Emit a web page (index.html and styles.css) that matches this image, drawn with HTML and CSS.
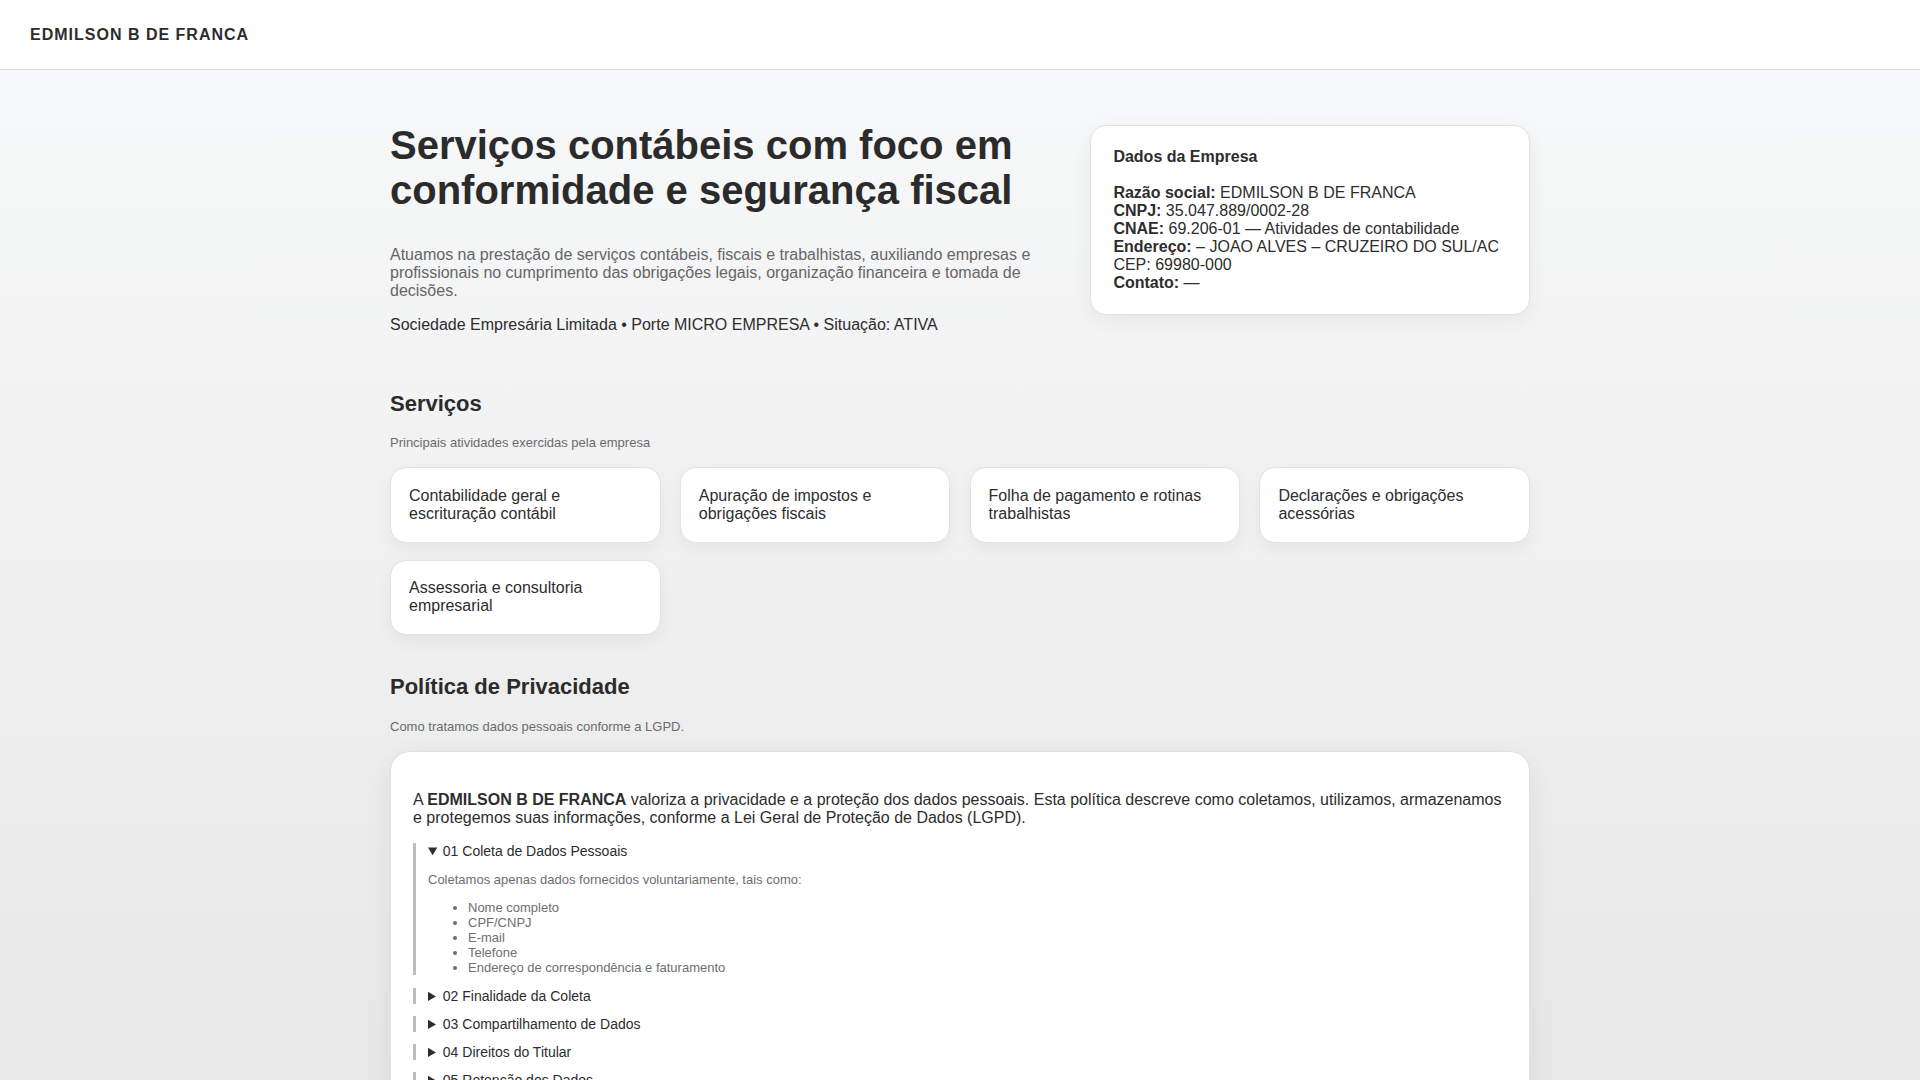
FILE: index.html
```html
<!DOCTYPE html>
<html lang="pt-BR">
<head>
<meta charset="utf-8">
<title>EDMILSON B DE FRANCA</title>
<link rel="stylesheet" href="styles.css">
</head>
<body>
<header class="site-header">
  <div class="brand">EDMILSON B DE FRANCA</div>
</header>
<main class="container">
  <section class="hero">
    <div class="hero-text">
      <h1 class="hero-title">Serviços contábeis com foco em conformidade e segurança fiscal</h1>
      <p class="hero-lead">Atuamos na prestação de serviços contábeis, fiscais e trabalhistas, auxiliando empresas e profissionais no cumprimento das obrigações legais, organização financeira e tomada de decisões.</p>
      <p class="hero-meta">Sociedade Empresária Limitada • Porte MICRO EMPRESA • Situação: ATIVA</p>
    </div>
    <aside class="company-card">
      <h3 class="company-title">Dados da Empresa</h3>
      <p class="company-info">
        <strong>Razão social:</strong> EDMILSON B DE FRANCA<br>
        <strong>CNPJ:</strong> 35.047.889/0002-28<br>
        <strong>CNAE:</strong> 69.206-01 — Atividades de contabilidade<br>
        <strong>Endereço:</strong> – JOAO ALVES – CRUZEIRO DO SUL/AC<br>
        CEP: 69980-000<br>
        <strong>Contato:</strong> —
      </p>
    </aside>
  </section>

  <section class="section services">
    <h2 class="section-title">Serviços</h2>
    <p class="section-sub">Principais atividades exercidas pela empresa</p>
    <div class="service-grid">
      <div class="service-card">Contabilidade geral e escrituração contábil</div>
      <div class="service-card">Apuração de impostos e obrigações fiscais</div>
      <div class="service-card">Folha de pagamento e rotinas trabalhistas</div>
      <div class="service-card">Declarações e obrigações acessórias</div>
      <div class="service-card">Assessoria e consultoria empresarial</div>
    </div>
  </section>

  <section class="section privacy">
    <h2 class="section-title">Política de Privacidade</h2>
    <p class="section-sub">Como tratamos dados pessoais conforme a LGPD.</p>
    <div class="privacy-card">
      <p class="privacy-intro">A <strong>EDMILSON B DE FRANCA</strong> valoriza a privacidade e a proteção dos dados pessoais. Esta política descreve como coletamos, utilizamos, armazenamos e protegemos suas informações, conforme a Lei Geral de Proteção de Dados (LGPD).</p>

      <details class="policy-item" open>
        <summary class="policy-summary">01 Coleta de Dados Pessoais</summary>
        <p class="policy-text">Coletamos apenas dados fornecidos voluntariamente, tais como:</p>
        <ul class="policy-list">
          <li>Nome completo</li>
          <li>CPF/CNPJ</li>
          <li>E-mail</li>
          <li>Telefone</li>
          <li>Endereço de correspondência e faturamento</li>
        </ul>
      </details>

      <details class="policy-item">
        <summary class="policy-summary">02 Finalidade da Coleta</summary>
        <p class="policy-text">Os dados são utilizados para prestação dos serviços contábeis, emissão de documentos fiscais e comunicação com o cliente.</p>
      </details>

      <details class="policy-item">
        <summary class="policy-summary">03 Compartilhamento de Dados</summary>
        <p class="policy-text">Os dados podem ser compartilhados apenas com órgãos públicos, quando exigido por lei.</p>
      </details>

      <details class="policy-item">
        <summary class="policy-summary">04 Direitos do Titular</summary>
        <p class="policy-text">O titular pode solicitar acesso, correção ou exclusão de seus dados a qualquer momento.</p>
      </details>

      <details class="policy-item">
        <summary class="policy-summary">05 Retenção dos Dados</summary>
        <p class="policy-text">Os dados são mantidos pelo prazo necessário ao cumprimento das obrigações legais.</p>
      </details>

      <details class="policy-item">
        <summary class="policy-summary">06 Segurança da Informação</summary>
        <p class="policy-text">Adotamos medidas técnicas e administrativas para proteger os dados pessoais.</p>
      </details>

      <details class="policy-item">
        <summary class="policy-summary">07 Alterações desta Política</summary>
        <p class="policy-text">Esta política pode ser atualizada periodicamente.</p>
      </details>
    </div>
  </section>
</main>
<footer class="site-footer">© EDMILSON B DE FRANCA — CNPJ 35.047.889/0002-28</footer>
</body>
</html>
```

FILE: styles.css
```css
html {
  background: #ededed;
}

body {
  margin: 0;
  font-family: "Liberation Sans", Arial, sans-serif;
  font-size: 16px;
  color: #2d2d2d;
  background: linear-gradient(180deg, #f8f9fa 0%, #e8e8e8 100%) fixed;
  min-height: 100vh;
}

.site-header {
  background: #ffffff;
  border-bottom: 1px solid #dcdcdc;
  padding: 25.6px 30px;
}

.brand {
  font-weight: 700;
  font-size: 16px;
  letter-spacing: 1px;
  color: #2d2d2d;
}

.container {
  width: 1140px;
  margin: 0 auto;
}

/* Hero */
.hero {
  display: grid;
  grid-template-columns: 1.5fr 1fr;
  column-gap: 40px;
  align-items: start;
  padding-top: 52.8px;
}

.hero-title {
  font-size: 40px;
  line-height: 1.12;
  font-weight: 700;
  margin: 0 0 33.5px;
  color: #2b2b2b;
}

.hero-lead {
  margin: 0 0 16.25px;
  color: #666666;
}

.hero-meta {
  margin: 0;
  color: #2d2d2d;
}

.company-card {
  margin-top: 2px;
  background: #ffffff;
  border: 1px solid #e2e2e2;
  border-radius: 16px;
  padding: 22.4px;
  box-shadow: 0 6px 20px rgba(0, 0, 0, 0.06);
}

.company-title {
  font-size: 16px;
  font-weight: 700;
  margin: 0 0 17.6px;
  color: #2d2d2d;
}

.company-info {
  margin: 0;
  color: #2d2d2d;
}

/* Sections */
.section {
  margin-top: 39px;
}

.services {
  margin-top: 56.25px;
}

.section-title {
  font-size: 22px;
  font-weight: 700;
  margin: 0 0 18.5px;
  color: #2b2b2b;
}

.section-sub {
  font-size: 13px;
  color: #6b6b6b;
  margin: 0 0 17.25px;
}

.service-grid {
  display: grid;
  grid-template-columns: repeat(4, 1fr);
  column-gap: 19.2px;
  row-gap: 17px;
}

.service-card {
  background: #ffffff;
  border: 1px solid #e2e2e2;
  border-radius: 16px;
  padding: 18.7px 18px;
  color: #2d2d2d;
  box-shadow: 0 6px 18px rgba(0, 0, 0, 0.05);
}

/* Privacy */
.privacy-card {
  background: #ffffff;
  border: 1px solid #e2e2e2;
  border-radius: 20px;
  padding: 22px;
  box-shadow: 0 8px 28px rgba(0, 0, 0, 0.07);
}

.privacy-intro {
  margin: 17.4px 0 16px;
  color: #2d2d2d;
}

.policy-item {
  border-left: 3px solid #bdbdbd;
  padding-left: 12px;
  margin: 0 0 12px;
}

.policy-summary {
  font-size: 14px;
  color: #2d2d2d;
  cursor: pointer;
}

.policy-text {
  font-size: 13px;
  color: #6e6e6e;
  margin: 13px 0;
}

.policy-list {
  font-size: 13px;
  color: #6e6e6e;
  margin: 13px 0;
  padding-left: 40px;
}

.site-footer {
  text-align: center;
  font-size: 13px;
  color: #777777;
  padding: 40px 0;
}
```
